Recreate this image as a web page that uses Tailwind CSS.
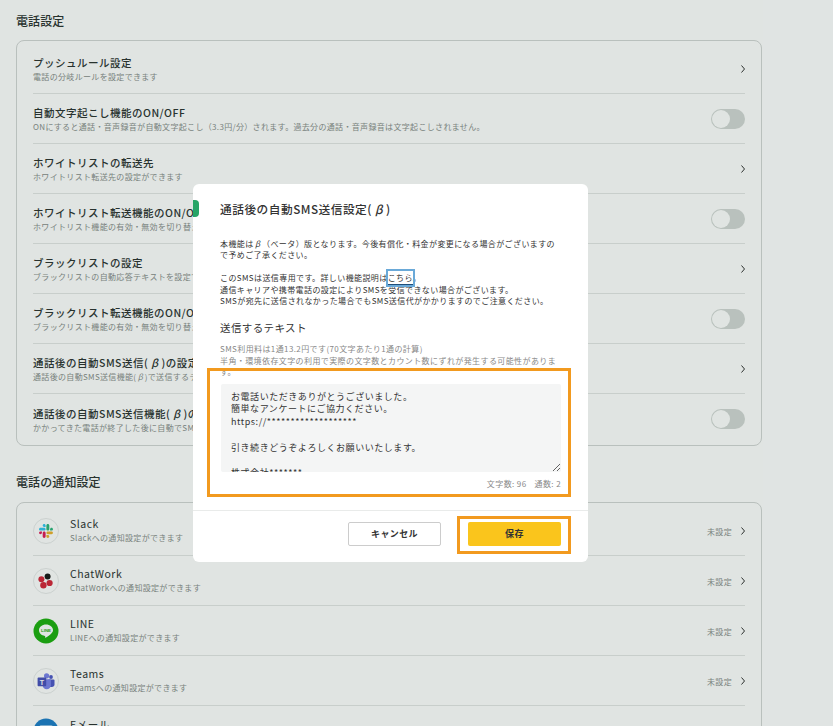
<!DOCTYPE html>
<html lang="ja">
<head>
  <meta charset="UTF-8" />
  <meta name="viewport" content="width=device-width,initial-scale=1.0"/>
  <title>電話設定</title>
  <script src="https://cdn.jsdelivr.net/npm/@tailwindcss/browser@4"></script>
</head>
<body class="relative h-[726px] overflow-hidden bg-white text-[#2e3533] font-['Noto_Sans_CJK_JP','Noto_Sans',sans-serif]">
  <main class="px-4 pt-[13px]">
    <h2 class="text-[12px] leading-[16px] font-medium tracking-[0.1px]">電話設定</h2>
    <div class="mt-[11px] w-[746px] rounded-lg border border-[#d3d6d5] pt-[3px] pb-px px-[15px] pl-[16px] pr-[16px]">
      <div class="flex h-[50px] items-center justify-between border-b border-[#e4e6e5]">
        <div class="pt-[3px]"><p class="text-[10.5px] leading-[14px] font-medium tracking-[0.5px]">プッシュルール設定</p><p class="text-[8px] leading-[14px] tracking-[0.33px] text-[#8a8f8d]">電話の分岐ルールを設定できます</p></div>
        <svg class="h-2 w-1" viewBox="0 0 4 8" fill="none" stroke="#333" stroke-width="1"><path d="M.5.5 3.5 4 .5 7.5"/></svg>
      </div>
      <div class="flex h-[50px] items-center justify-between border-b border-[#e4e6e5]">
        <div class="pt-[3px]"><p class="text-[10.5px] leading-[14px] font-medium tracking-[0.5px]">自動文字起こし機能のON/OFF</p><p class="text-[8px] leading-[14px] tracking-[0.33px] text-[#8a8f8d]">ONにすると通話・音声録音が自動文字起こし（3.3円/分）されます。過去分の通話・音声録音は文字起こしされません。</p></div>
        <span class="h-[20px] w-[34px] rounded-full bg-[#d3d8d5] p-px"><span class="block size-[18px] rounded-full bg-white"></span></span>
      </div>
      <div class="flex h-[50px] items-center justify-between border-b border-[#e4e6e5]">
        <div class="pt-[3px]"><p class="text-[10.5px] leading-[14px] font-medium tracking-[0.5px]">ホワイトリストの転送先</p><p class="text-[8px] leading-[14px] tracking-[0.33px] text-[#8a8f8d]">ホワイトリスト転送先の設定ができます</p></div>
        <svg class="h-2 w-1" viewBox="0 0 4 8" fill="none" stroke="#333" stroke-width="1"><path d="M.5.5 3.5 4 .5 7.5"/></svg>
      </div>
      <div class="flex h-[50px] items-center justify-between border-b border-[#e4e6e5]">
        <div class="pt-[3px]"><p class="text-[10.5px] leading-[14px] font-medium tracking-[0.5px]">ホワイトリスト転送機能のON/OFF</p><p class="text-[8px] leading-[14px] tracking-[0.33px] text-[#8a8f8d]">ホワイトリスト機能の有効・無効を切り替えます</p></div>
        <span class="h-[20px] w-[34px] rounded-full bg-[#d3d8d5] p-px"><span class="block size-[18px] rounded-full bg-white"></span></span>
      </div>
      <div class="flex h-[50px] items-center justify-between border-b border-[#e4e6e5]">
        <div class="pt-[3px]"><p class="text-[10.5px] leading-[14px] font-medium tracking-[0.5px]">ブラックリストの設定</p><p class="text-[8px] leading-[14px] tracking-[0.33px] text-[#8a8f8d]">ブラックリストの自動応答テキストを設定できます</p></div>
        <svg class="h-2 w-1" viewBox="0 0 4 8" fill="none" stroke="#333" stroke-width="1"><path d="M.5.5 3.5 4 .5 7.5"/></svg>
      </div>
      <div class="flex h-[50px] items-center justify-between border-b border-[#e4e6e5]">
        <div class="pt-[3px]"><p class="text-[10.5px] leading-[14px] font-medium tracking-[0.5px]">ブラックリスト転送機能のON/OFF</p><p class="text-[8px] leading-[14px] tracking-[0.33px] text-[#8a8f8d]">ブラックリスト機能の有効・無効を切り替えます</p></div>
        <span class="h-[20px] w-[34px] rounded-full bg-[#d3d8d5] p-px"><span class="block size-[18px] rounded-full bg-white"></span></span>
      </div>
      <div class="flex h-[50px] items-center justify-between border-b border-[#e4e6e5]">
        <div class="pt-[3px]"><p class="text-[10.5px] leading-[14px] font-medium tracking-[0.5px]">通話後の自動SMS送信(<i class="mx-[3px]">β</i>)の設定</p><p class="text-[8px] leading-[14px] tracking-[0.33px] text-[#8a8f8d]">通話後の自動SMS送信機能(<i class="mx-[1.5px]">β</i>)で送信するテキストを設定できます</p></div>
        <svg class="h-2 w-1" viewBox="0 0 4 8" fill="none" stroke="#333" stroke-width="1"><path d="M.5.5 3.5 4 .5 7.5"/></svg>
      </div>
      <div class="flex h-[50px] items-center justify-between">
        <div class="pt-[3px]"><p class="text-[10.5px] leading-[14px] font-medium tracking-[0.5px]">通話後の自動SMS送信機能(<i class="mx-[3px]">β</i>)のON/OFF</p><p class="text-[8px] leading-[14px] tracking-[0.33px] text-[#8a8f8d]">かかってきた電話が終了した後に自動でSMSを送信します</p></div>
        <span class="h-[20px] w-[34px] rounded-full bg-[#d3d8d5] p-px"><span class="block size-[18px] rounded-full bg-white"></span></span>
      </div>
    </div>

    <h2 class="mt-[28px] text-[12px] leading-[16px] font-medium tracking-[0.1px]">電話の通知設定</h2>
    <div class="mt-[12px] w-[746px] rounded-lg border border-[#d3d6d5] pt-[3px] pl-[16px] pr-[16px]">
      <div class="flex h-[50px] items-center border-b border-[#e4e6e5]">
        <span class="flex size-[26px] items-center justify-center rounded-full border border-[#e8eaea] bg-white">
          <svg class="size-[14px]" viewBox="0 0 122.8 122.8"><path fill="#e01e5a" d="M25.8 77.6c0 7.1-5.8 12.9-12.9 12.9S0 84.7 0 77.6s5.8-12.9 12.9-12.9h12.9v12.9zM32.3 77.6c0-7.1 5.8-12.9 12.9-12.9s12.9 5.8 12.9 12.9v32.3c0 7.1-5.8 12.9-12.9 12.9s-12.9-5.8-12.9-12.9V77.6z"/><path fill="#36c5f0" d="M45.2 25.8c-7.1 0-12.9-5.8-12.9-12.9S38.1 0 45.2 0s12.9 5.8 12.9 12.9v12.9H45.2zM45.2 32.3c7.1 0 12.9 5.8 12.9 12.9s-5.8 12.9-12.9 12.9H12.9C5.8 58.1 0 52.3 0 45.2s5.8-12.9 12.9-12.9h32.3z"/><path fill="#2eb67d" d="M97 45.2c0-7.1 5.8-12.9 12.9-12.9s12.9 5.8 12.9 12.9-5.8 12.9-12.9 12.9H97V45.2zM90.5 45.2c0 7.1-5.8 12.9-12.9 12.9s-12.9-5.8-12.9-12.9V12.9C64.7 5.8 70.5 0 77.6 0s12.9 5.8 12.9 12.9v32.3z"/><path fill="#ecb22e" d="M77.6 97c7.1 0 12.9 5.8 12.9 12.9s-5.8 12.9-12.9 12.9-12.9-5.8-12.9-12.9V97h12.9zM77.6 90.5c-7.1 0-12.9-5.8-12.9-12.9s5.8-12.9 12.9-12.9h32.3c7.1 0 12.9 5.8 12.9 12.9s-5.8 12.9-12.9 12.9H77.6z"/></svg>
        </span>
        <div class="ml-[11px] flex-1 pt-px"><p class="text-[10.5px] leading-[14px] tracking-[0.5px]">Slack</p><p class="text-[8px] leading-[14px] tracking-[0.33px] text-[#8a8f8d]">Slackへの通知設定ができます</p></div>
        <span class="mt-[2px] text-[8px] text-[#8a8f8d] tracking-[0.33px]">未設定</span>
        <svg class="ml-[9px] h-2 w-1" viewBox="0 0 4 8" fill="none" stroke="#333" stroke-width="1"><path d="M.5.5 3.5 4 .5 7.5"/></svg>
      </div>
      <div class="flex h-[50px] items-center border-b border-[#e4e6e5]">
        <span class="flex size-[26px] items-center justify-center rounded-full border border-[#e8eaea] bg-white">
          <svg class="size-[16px]" viewBox="0 0 16 16"><circle cx="9.6" cy="3.6" r="3" fill="#1a1a1a"/><circle cx="3.4" cy="6.2" r="3" fill="#d5283c"/><circle cx="11.6" cy="10" r="3.1" fill="#d5283c"/><circle cx="5.4" cy="12.2" r="3.2" fill="#d5283c"/></svg>
        </span>
        <div class="ml-[11px] flex-1 pt-px"><p class="text-[10.5px] leading-[14px] tracking-[0.5px]">ChatWork</p><p class="text-[8px] leading-[14px] tracking-[0.33px] text-[#8a8f8d]">ChatWorkへの通知設定ができます</p></div>
        <span class="mt-[2px] text-[8px] text-[#8a8f8d] tracking-[0.33px]">未設定</span>
        <svg class="ml-[9px] h-2 w-1" viewBox="0 0 4 8" fill="none" stroke="#333" stroke-width="1"><path d="M.5.5 3.5 4 .5 7.5"/></svg>
      </div>
      <div class="flex h-[50px] items-center border-b border-[#e4e6e5]">
        <svg class="size-[26px]" viewBox="0 0 26 26"><circle cx="13" cy="13" r="12.5" fill="#1fb012"/><path fill="#fff" d="M13 6.6c-3.9 0-7 2.5-7 5.7 0 2.8 2.5 5.2 5.8 5.6.6.1.4.7.3 1.4-.1.5.3.6.9.2 1.6-1 3.9-2.6 5.1-3.8 1.2-1.1 1.9-2.1 1.9-3.4 0-3.2-3.1-5.7-7-5.7z"/><text x="13" y="14" text-anchor="middle" font-size="4.4" font-weight="700" fill="#1fb012" font-family="'Liberation Sans',sans-serif">LINE</text></svg>
        <div class="ml-[11px] flex-1 pt-px"><p class="text-[10.5px] leading-[14px] tracking-[0.5px]">LINE</p><p class="text-[8px] leading-[14px] tracking-[0.33px] text-[#8a8f8d]">LINEへの通知設定ができます</p></div>
        <span class="mt-[2px] text-[8px] text-[#8a8f8d] tracking-[0.33px]">未設定</span>
        <svg class="ml-[9px] h-2 w-1" viewBox="0 0 4 8" fill="none" stroke="#333" stroke-width="1"><path d="M.5.5 3.5 4 .5 7.5"/></svg>
      </div>
      <div class="flex h-[50px] items-center border-b border-[#e4e6e5]">
        <span class="flex size-[26px] items-center justify-center rounded-full border border-[#e8eaea] bg-white">
          <svg class="size-[18px]" viewBox="0 0 18 18"><circle cx="14" cy="5" r="1.9" fill="#5059c9"/><path fill="#5059c9" d="M11.5 7.6h5.2c.4 0 .8.4.8.8v4.2c0 1.4-1.1 2.5-2.6 2.5h-3.4z"/><circle cx="9.6" cy="3.8" r="2.6" fill="#7b83eb"/><path fill="#7b83eb" d="M5.6 7.3h7.6c.4 0 .7.3.7.7v5.3c0 2.2-1.9 4-4.2 4s-4.1-1.8-4.1-4z"/><rect x=".6" y="5.6" width="8.6" height="8.6" rx=".8" fill="#4b53bc"/><text x="4.9" y="12.5" text-anchor="middle" font-size="7" font-weight="700" fill="#fff" font-family="'Liberation Sans',sans-serif">T</text></svg>
        </span>
        <div class="ml-[11px] flex-1 pt-px"><p class="text-[10.5px] leading-[14px] tracking-[0.5px]">Teams</p><p class="text-[8px] leading-[14px] tracking-[0.33px] text-[#8a8f8d]">Teamsへの通知設定ができます</p></div>
        <span class="mt-[2px] text-[8px] text-[#8a8f8d] tracking-[0.33px]">未設定</span>
        <svg class="ml-[9px] h-2 w-1" viewBox="0 0 4 8" fill="none" stroke="#333" stroke-width="1"><path d="M.5.5 3.5 4 .5 7.5"/></svg>
      </div>
      <div class="flex h-[50px] items-center">
        <svg class="size-[26px]" viewBox="0 0 26 26"><circle cx="13" cy="13" r="12.5" fill="#1f7fc9"/><rect x="6.5" y="8" width="13" height="10" rx="1.2" fill="none" stroke="#fff" stroke-width="1.2"/><path d="M7 9l6 5 6-5" fill="none" stroke="#fff" stroke-width="1.2"/></svg>
        <div class="ml-[11px] flex-1 pt-px"><p class="text-[10.5px] leading-[14px] tracking-[0.5px]">Eメール</p><p class="text-[8px] leading-[14px] tracking-[0.33px] text-[#8a8f8d]">Eメールへの通知設定ができます</p></div>
      </div>
    </div>
  </main>

  <!-- overlay + modal -->
  <div class="absolute inset-0 bg-[#001e14]/12">
    <div class="relative ml-[193px] mt-[184px] h-[378px] w-[395px] rounded-md bg-white text-[#333]">
      <span class="absolute left-0 top-[16px] h-[17px] w-[6px] rounded-r-sm bg-[#27a567]"></span>
      <h3 class="pl-[27px] pt-[16px] text-[11.7px] leading-[18px] font-medium tracking-[0.5px]">通話後の自動SMS送信設定(<i class="mx-[3px]">β</i>)</h3>

      <div class="mt-[20px] px-[27px] text-[8px] leading-[11.4px] tracking-[0.4px]">
        <p>本機能は<i class="mx-[1.5px]">β</i>（ベータ）版となります。今後有償化・料金が変更になる場合がございますので予めご了承ください。</p>
        <p class="mt-[11.4px]">このSMSは送信専用です。詳しい機能説明は<a class="border-b border-[#1f4e79] py-px outline-2 outline-[#6aa9d8]">こちら</a>。<br>通信キャリアや携帯電話の設定によりSMSを受信できない場合がございます。<br>SMSが宛先に送信されなかった場合でもSMS送信代がかかりますのでご注意ください。</p>
      </div>

      <h4 class="mt-[14px] px-[27px] text-[10.5px] leading-[16px] tracking-[0.4px]">送信するテキスト</h4>
      <p class="mt-[7px] px-[27px] text-[8px] leading-[11.4px] tracking-[0.4px] text-[#888]">SMS利用料は1通13.2円です(70文字あたり1通の計算)<br>半角・環境依存文字の利用で実際の文字数とカウント数にずれが発生する可能性があります。</p>

      <div class="mt-[6px] pl-[28px] pr-[27px]">
        <textarea class="block h-[88px] w-full resize-y overflow-hidden rounded-[2px] bg-[#f4f5f5] px-[10px] pt-[7px] text-[9px] leading-[12.8px] tracking-[0.55px] text-[#333]">お電話いただきありがとうございました。
簡単なアンケートにご協力ください。
https://*******************

引き続きどうぞよろしくお願いいたします。

株式会社*******</textarea>
        <p class="mt-[6px] flex justify-end gap-[8px] text-[8px] leading-[12px] tracking-[0.4px] text-[#888]"><span>文字数: 96</span><span>通数: 2</span></p>
      </div>

      <div class="mt-[20px] flex justify-end gap-[27px] border-t border-[#e9ebea] pt-[11px] pr-[27px]">
        <button class="h-[24px] w-[93px] rounded-[2px] border border-[#ccc] bg-white text-[9px] font-semibold tracking-[0.4px]">キャンセル</button>
        <button class="h-[24px] w-[93px] rounded-[2px] bg-[#fac51c] text-[9px] font-semibold tracking-[0.4px]">保存</button>
      </div>

      <span class="absolute left-[14px] top-[184px] h-[129px] w-[364px] border-[3px] border-[#f29a1f]"></span>
      <span class="absolute left-[264px] top-[332px] h-[38px] w-[114px] border-[3px] border-[#f29a1f]"></span>
    </div>
  </div>
</body>
</html>
